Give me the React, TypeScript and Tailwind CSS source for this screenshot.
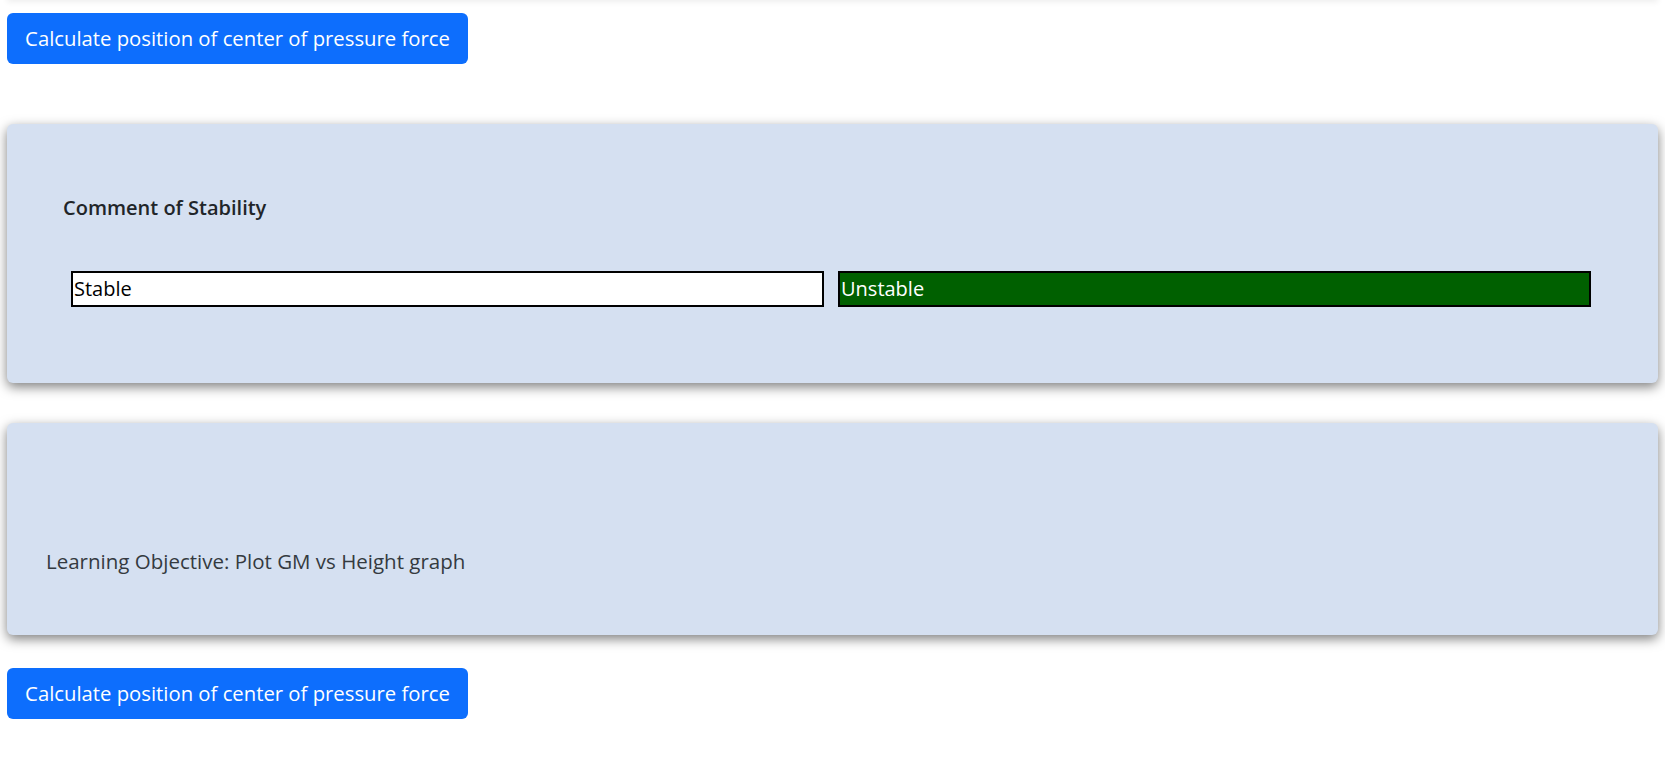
const font = "font-['Open_Sans','Liberation_Sans',sans-serif]";

const CalcButton = () => (
  <button
    type="button"
    className="h-[51px] w-[461px] rounded-md bg-[#0d6efd] text-[20.3px] text-white"
  >
    Calculate position of center of pressure force
  </button>
);

export default function App() {
  return (
    <div className={`${font} min-h-[758px] bg-white text-[#212529]`}>
      {/* tail of the card above the fold */}
      <div className="mx-[7px] -mt-[30px] h-[30px] bg-white shadow-[0_2px_6px_rgba(0,0,0,0.07)]" />

      <div className="px-[7px] pt-[13px]">
        <CalcButton />
      </div>

      <div className="mx-[7px] mt-[60px] h-[259px] rounded-md bg-[#d5e0f1] pl-[56px] pr-[67px] pt-[72px] shadow-[0_4px_12px_rgba(0,0,0,0.5)]">
        <h5 className="text-[20px] font-semibold leading-[24px] text-[#212529]">Comment of Stability</h5>
        <div className="ml-[8px] mt-[51px] flex gap-[14px]">
          <div className="h-[36px] flex-1 border-2 border-black bg-white px-px text-[20px] leading-[32px] text-black">
            Stable
          </div>
          <div className="h-[36px] flex-1 border-2 border-black bg-[#006000] px-px text-[20px] leading-[32px] text-white">
            Unstable
          </div>
        </div>
      </div>

      <div className="mx-[7px] mt-[40px] flex h-[212px] items-end rounded-md bg-[#d5e0f1] px-[39px] pb-[62px] shadow-[0_4px_12px_rgba(0,0,0,0.5)]">
        <p className="text-[20.5px] leading-[24px] text-[#343a40]">Learning Objective: Plot GM vs Height graph</p>
      </div>

      <div className="px-[7px] pt-[33px]">
        <CalcButton />
      </div>
    </div>
  );
}
